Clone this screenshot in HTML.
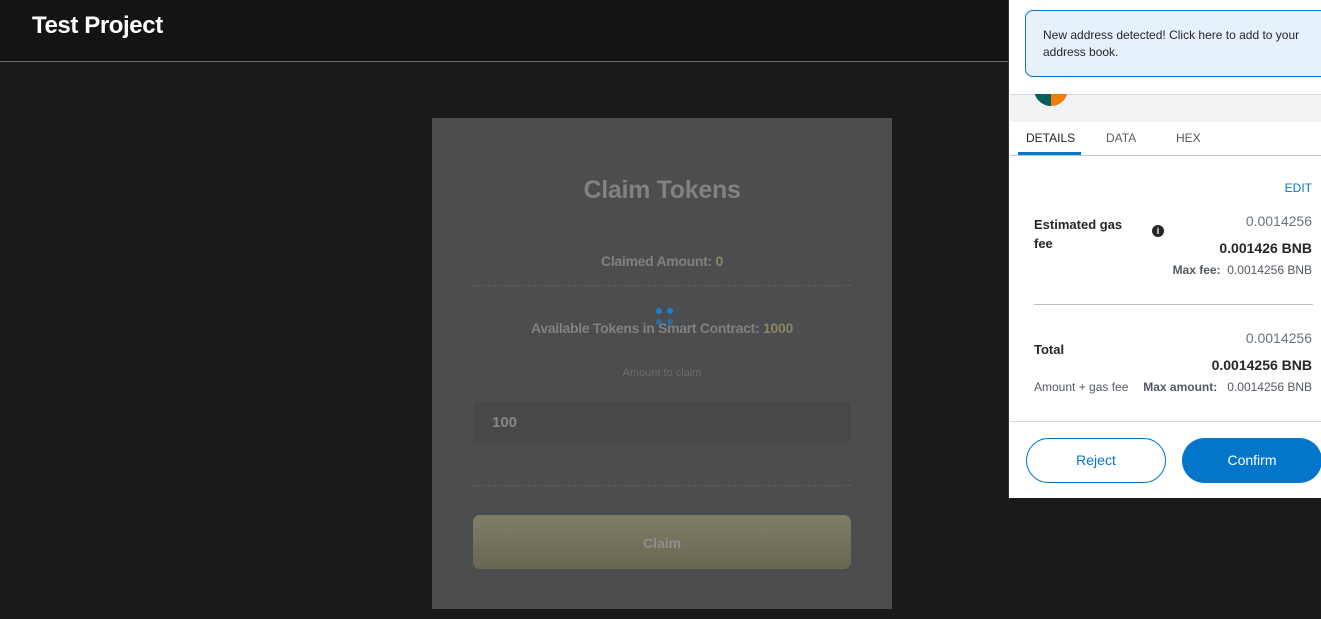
<!DOCTYPE html>
<html><head><style>
*{margin:0;padding:0;box-sizing:border-box}
body{width:1321px;height:619px;background:#1a1b1d;position:relative;overflow:hidden;font-family:"Liberation Sans",sans-serif}
.hdr{position:absolute;left:0;top:0;width:1321px;height:62px;background:#141414;border-bottom:1px solid #6a6a6a}
.hdr span{position:absolute;left:32px;top:12px;color:#fff;font-size:24px;font-weight:bold;letter-spacing:-0.4px}
.card{position:absolute;left:432px;top:118px;width:460px;height:491px;background:#4c4d4f;text-align:center;color:#7f8082}
.t{position:absolute;width:100%;font-weight:bold}
.dash{position:absolute;left:41px;width:378px;border-top:1px dashed #5c5d5f}
.pop{position:absolute;left:1008px;top:0;width:313px;height:498px;background:#fff;border-left:1px solid #333;color:#24272a}
.note{position:absolute;left:16px;top:10px;width:305px;height:67px;background:#e6f1fb;border:1px solid #0376c9;border-right:none;border-radius:8px 0 0 8px;font-size:12px;line-height:17px;padding:16px 0 0 17px;color:#24272a}
.gray{position:absolute;left:1px;top:94px;width:312px;height:28px;background:#f2f3f4;border-top:1px solid #d6d9dc}
.tab{position:absolute;top:131px;font-size:12px;color:#535a61}
.r{position:absolute;right:9px;text-align:right}
</style></head><body>
<div class="hdr"><span>Test Project</span></div>
<div class="card">
 <div class="t" style="top:58px;font-size:25px;color:#808183;letter-spacing:-0.3px">Claim Tokens</div>
 <div class="t" style="top:135px;font-size:14px;letter-spacing:-0.3px">Claimed Amount: <span style="color:#8c8460">0</span></div>
 <div class="dash" style="top:167px"></div>
 <div class="t" style="top:202px;font-size:14px;letter-spacing:-0.3px">Available Tokens in Smart Contract: <span style="color:#8c8460">1000</span></div>
 <div style="position:absolute;left:224px;top:190px;width:6px;height:6px;border-radius:3px;background:#1c7fd8"></div>
 <div style="position:absolute;left:235px;top:190px;width:6px;height:6px;border-radius:3px;background:#1c7fd8"></div>
 <div style="position:absolute;left:224px;top:201px;width:6px;height:6px;border-radius:3px;background:#2f6aa3"></div>
 <div style="position:absolute;left:235px;top:201px;width:6px;height:6px;border-radius:3px;background:#2f6aa3"></div>
 <div class="t" style="top:249px;font-size:11px;font-weight:normal;color:#6b6c6e">Amount to claim</div>
 <div style="position:absolute;left:41px;top:284px;width:378px;height:41px;background:#474947;border-radius:4px;text-align:left;padding:12px 0 0 19px;font-weight:bold;font-size:15px;color:#858687">100</div>
 <div class="dash" style="top:367px"></div>
 <div style="position:absolute;left:41px;top:397px;width:378px;height:54px;border-radius:7px;background:linear-gradient(#7e7f66,#696652);font-weight:bold;font-size:14px;color:#8d8e8f;padding-top:20px">Claim</div>
</div>
<div class="pop">
 <div class="gray"></div>
 <div style="position:absolute;left:25px;top:88px;width:34px;height:18px;overflow:hidden"><div style="width:34px;height:34px;border-radius:17px;margin-top:-16px;background:linear-gradient(90deg,#035f5a 50%,#f47c05 50%)"></div></div>
 <div style="position:absolute;left:1px;top:77px;width:312px;height:17px;background:#fff"></div>
 <div class="note">New address detected! Click here to add to your address book.</div>
 <div class="tab" style="left:17px;color:#24272a">DETAILS</div>
 <div class="tab" style="left:97px">DATA</div>
 <div class="tab" style="left:167px">HEX</div>
 <div style="position:absolute;left:9px;top:152px;width:63px;height:3px;background:#0376c9"></div>
 <div style="position:absolute;left:1px;top:155px;width:312px;border-top:1px solid #c4c6c9"></div>
 <div class="r" style="top:181px;font-size:12px;color:#0376c9">EDIT</div>
 <div style="position:absolute;left:25px;top:215px;font-size:13px;font-weight:bold;line-height:19px">Estimated gas<br>fee</div>
 <div style="position:absolute;left:143px;top:225px;width:12px;height:12px;border-radius:6px;background:#24272a;color:#fff;font-size:9px;font-weight:bold;text-align:center;line-height:12px">i</div>
 <div class="r" style="top:213px;font-size:14px;color:#6a737d">0.0014256</div>
 <div class="r" style="top:240px;font-size:14px;font-weight:bold">0.001426 BNB</div>
 <div class="r" style="top:263px;font-size:12px;color:#535a61"><b>Max fee:</b>&nbsp; 0.0014256 BNB</div>
 <div style="position:absolute;left:25px;top:304px;width:279px;border-top:1px solid #bbc0c5"></div>
 <div class="r" style="top:330px;font-size:14px;color:#6a737d">0.0014256</div>
 <div style="position:absolute;left:25px;top:342px;font-size:13px;font-weight:bold">Total</div>
 <div class="r" style="top:357px;font-size:14px;font-weight:bold">0.0014256 BNB</div>
 <div style="position:absolute;left:25px;top:380px;font-size:12px;color:#535a61">Amount + gas fee</div>
 <div class="r" style="top:380px;font-size:12px;color:#535a61"><b>Max amount:</b>&nbsp;&nbsp; 0.0014256 BNB</div>
 <div style="position:absolute;left:1px;top:421px;width:312px;border-top:1px solid #d6d9dc"></div>
 <div style="position:absolute;left:17px;top:438px;width:140px;height:45px;border:1px solid #0376c9;border-radius:23px;color:#0376c9;font-size:14px;text-align:center;line-height:43px">Reject</div>
 <div style="position:absolute;left:173px;top:438px;width:140px;height:45px;background:#0376c9;border-radius:23px;color:#fff;font-size:14px;text-align:center;line-height:45px">Confirm</div>
</div>
</body></html>
